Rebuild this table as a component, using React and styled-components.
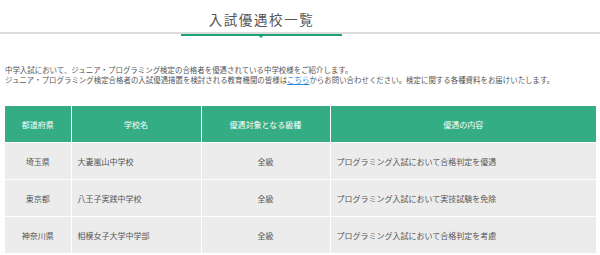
import React from 'react';
import styled, { createGlobalStyle } from 'styled-components';

const GlobalStyle = createGlobalStyle`
    body {
        margin: 0;
        background: #fff;
        font-family: "Noto Sans CJK JP", "Noto Sans", sans-serif;
        color: #555;
    }
`;

const Page = styled.div`
    width: 600px;
    height: 255px;
    overflow: hidden;
`;

const HeadingBar = styled.div`
    border-bottom: 2px solid #dcdcdc;
    height: 34px;
    box-sizing: border-box;
`;

const Heading = styled.h2`
    position: relative;
    margin: 0 0 -2px 181px;
    width: 161px;
    height: 36px;
    box-sizing: border-box;
    padding-top: 10px;
    text-align: center;
    font-size: 13.5px;
    font-weight: 400;
    letter-spacing: 1.6px;
    line-height: 18px;
    color: #555;
    border-bottom: 2px solid #1aa376;

    &::after {
        content: '';
        position: absolute;
        left: 78px;
        bottom: -4px;
        border-left: 2px solid transparent;
        border-right: 2px solid transparent;
        border-top: 2px solid #1aa376;
    }
`;

const Intro = styled.p`
    margin: 31px 0 0 5px;
    font-size: 7.45px;
    line-height: 10px;
    color: #555;
    white-space: nowrap;

    a {
        color: #2a8ad8;
        text-decoration: underline;
    }
`;

const Table = styled.table`
    margin: 21px 0 0 5px;
    width: 591px;
    border-collapse: collapse;
    font-size: 8px;
    table-layout: fixed;
`;

const Th = styled.th`
    height: 36px;
    padding: 0;
    background: #35ad84;
    color: #fff;
    font-weight: 400;
    text-align: center;
    border: 1px solid #fff;
    border-top: none;
    &:first-child { border-left: none; }
    &:last-child { border-right: none; }
`;

const Td = styled.td`
    height: 36px;
    padding: 0 ${(p) => (p.$center ? 0 : 6)}px;
    background: #ececec;
    color: #555;
    text-align: ${(p) => (p.$center ? 'center' : 'left')};
    border: 1px solid #fff;
    &:first-child { border-left: none; }
    &:last-child { border-right: none; }
`;

const rows = [
    ['埼玉県', '大妻嵐山中学校', '全級', 'プログラミング入試において合格判定を優遇'],
    ['東京都', '八王子実践中学校', '全級', 'プログラミング入試において実技試験を免除'],
    ['神奈川県', '相模女子大学中学部', '全級', 'プログラミング入試において合格判定を考慮'],
];

export default function App() {
    return (
        <Page>
            <GlobalStyle />
            <HeadingBar>
                <Heading>入試優遇校一覧</Heading>
            </HeadingBar>
            <Intro>
                中学入試において、ジュニア・プログラミング検定の合格者を優遇されている中学校様をご紹介します。
                <br />
                ジュニア・プログラミング検定合格者の入試優遇措置を検討される教育機関の皆様は
                <a href="#">こちら</a>
                からお問い合わせください。検定に関する各種資料をお届けいたします。
            </Intro>
            <Table>
                <colgroup>
                    <col style={{ width: 66 }} />
                    <col style={{ width: 130 }} />
                    <col style={{ width: 129 }} />
                    <col />
                </colgroup>
                <thead>
                    <tr>
                        <Th>都道府県</Th>
                        <Th>学校名</Th>
                        <Th>優遇対象となる級種</Th>
                        <Th>優遇の内容</Th>
                    </tr>
                </thead>
                <tbody>
                    {rows.map((r) => (
                        <tr key={r[1]}>
                            <Td $center>{r[0]}</Td>
                            <Td>{r[1]}</Td>
                            <Td $center>{r[2]}</Td>
                            <Td>{r[3]}</Td>
                        </tr>
                    ))}
                </tbody>
            </Table>
        </Page>
    );
}
